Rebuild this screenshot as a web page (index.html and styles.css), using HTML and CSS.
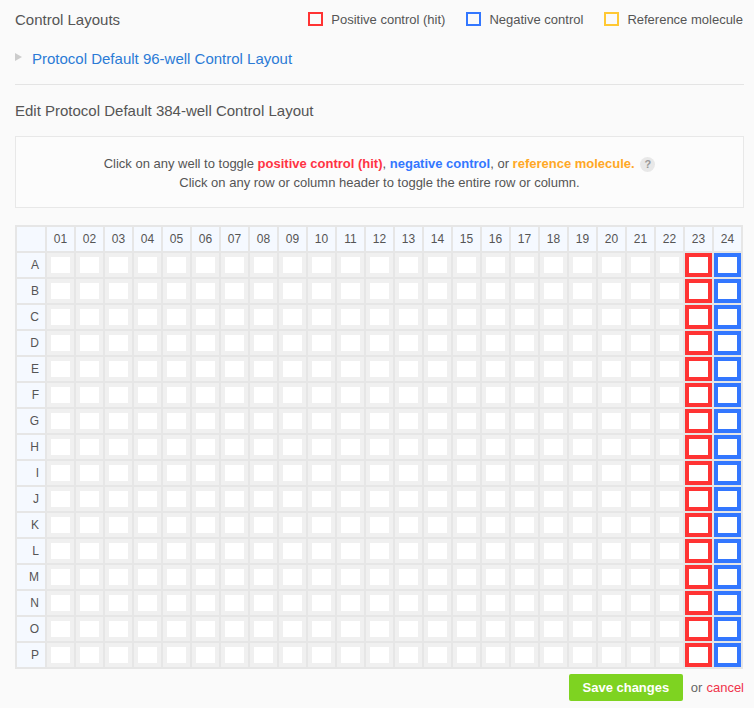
FILE: index.html
```html
<!DOCTYPE html>
<html>
<head>
<meta charset="utf-8">
<link rel="stylesheet" href="styles.css">
</head>
<body>
<div class="page">
  <div class="topbar">
    <h2 class="title">Control Layouts</h2>
    <ul class="legend">
      <li><span class="sq sq-pos"></span>Positive control (hit)</li>
      <li><span class="sq sq-neg"></span>Negative control</li>
      <li><span class="sq sq-ref"></span>Reference molecule</li>
    </ul>
  </div>
  <div class="collapsed"><span class="tri"></span><a class="link">Protocol Default 96-well Control Layout</a></div>
  <hr class="sep">
  <h3 class="edit-title">Edit Protocol Default 384-well Control Layout</h3>
  <div class="info">
    <p>Click on any well to toggle <b class="c-pos">positive control (hit)</b>, <b class="c-neg">negative control</b>, or <b class="c-ref">reference molecule.</b> <span class="help">?</span></p>
    <p>Click on any row or column header to toggle the entire row or column.</p>
  </div>
  <table class="plate">
    <tr><th class="corner"></th><th>01</th><th>02</th><th>03</th><th>04</th><th>05</th><th>06</th><th>07</th><th>08</th><th>09</th><th>10</th><th>11</th><th>12</th><th>13</th><th>14</th><th>15</th><th>16</th><th>17</th><th>18</th><th>19</th><th>20</th><th>21</th><th>22</th><th>23</th><th>24</th></tr>
    <tr><th class="rh">A</th><td><b></b></td><td><b></b></td><td><b></b></td><td><b></b></td><td><b></b></td><td><b></b></td><td><b></b></td><td><b></b></td><td><b></b></td><td><b></b></td><td><b></b></td><td><b></b></td><td><b></b></td><td><b></b></td><td><b></b></td><td><b></b></td><td><b></b></td><td><b></b></td><td><b></b></td><td><b></b></td><td><b></b></td><td><b></b></td><td class="pos"><b></b></td><td class="neg"><b></b></td></tr>
    <tr><th class="rh">B</th><td><b></b></td><td><b></b></td><td><b></b></td><td><b></b></td><td><b></b></td><td><b></b></td><td><b></b></td><td><b></b></td><td><b></b></td><td><b></b></td><td><b></b></td><td><b></b></td><td><b></b></td><td><b></b></td><td><b></b></td><td><b></b></td><td><b></b></td><td><b></b></td><td><b></b></td><td><b></b></td><td><b></b></td><td><b></b></td><td class="pos"><b></b></td><td class="neg"><b></b></td></tr>
    <tr><th class="rh">C</th><td><b></b></td><td><b></b></td><td><b></b></td><td><b></b></td><td><b></b></td><td><b></b></td><td><b></b></td><td><b></b></td><td><b></b></td><td><b></b></td><td><b></b></td><td><b></b></td><td><b></b></td><td><b></b></td><td><b></b></td><td><b></b></td><td><b></b></td><td><b></b></td><td><b></b></td><td><b></b></td><td><b></b></td><td><b></b></td><td class="pos"><b></b></td><td class="neg"><b></b></td></tr>
    <tr><th class="rh">D</th><td><b></b></td><td><b></b></td><td><b></b></td><td><b></b></td><td><b></b></td><td><b></b></td><td><b></b></td><td><b></b></td><td><b></b></td><td><b></b></td><td><b></b></td><td><b></b></td><td><b></b></td><td><b></b></td><td><b></b></td><td><b></b></td><td><b></b></td><td><b></b></td><td><b></b></td><td><b></b></td><td><b></b></td><td><b></b></td><td class="pos"><b></b></td><td class="neg"><b></b></td></tr>
    <tr><th class="rh">E</th><td><b></b></td><td><b></b></td><td><b></b></td><td><b></b></td><td><b></b></td><td><b></b></td><td><b></b></td><td><b></b></td><td><b></b></td><td><b></b></td><td><b></b></td><td><b></b></td><td><b></b></td><td><b></b></td><td><b></b></td><td><b></b></td><td><b></b></td><td><b></b></td><td><b></b></td><td><b></b></td><td><b></b></td><td><b></b></td><td class="pos"><b></b></td><td class="neg"><b></b></td></tr>
    <tr><th class="rh">F</th><td><b></b></td><td><b></b></td><td><b></b></td><td><b></b></td><td><b></b></td><td><b></b></td><td><b></b></td><td><b></b></td><td><b></b></td><td><b></b></td><td><b></b></td><td><b></b></td><td><b></b></td><td><b></b></td><td><b></b></td><td><b></b></td><td><b></b></td><td><b></b></td><td><b></b></td><td><b></b></td><td><b></b></td><td><b></b></td><td class="pos"><b></b></td><td class="neg"><b></b></td></tr>
    <tr><th class="rh">G</th><td><b></b></td><td><b></b></td><td><b></b></td><td><b></b></td><td><b></b></td><td><b></b></td><td><b></b></td><td><b></b></td><td><b></b></td><td><b></b></td><td><b></b></td><td><b></b></td><td><b></b></td><td><b></b></td><td><b></b></td><td><b></b></td><td><b></b></td><td><b></b></td><td><b></b></td><td><b></b></td><td><b></b></td><td><b></b></td><td class="pos"><b></b></td><td class="neg"><b></b></td></tr>
    <tr><th class="rh">H</th><td><b></b></td><td><b></b></td><td><b></b></td><td><b></b></td><td><b></b></td><td><b></b></td><td><b></b></td><td><b></b></td><td><b></b></td><td><b></b></td><td><b></b></td><td><b></b></td><td><b></b></td><td><b></b></td><td><b></b></td><td><b></b></td><td><b></b></td><td><b></b></td><td><b></b></td><td><b></b></td><td><b></b></td><td><b></b></td><td class="pos"><b></b></td><td class="neg"><b></b></td></tr>
    <tr><th class="rh">I</th><td><b></b></td><td><b></b></td><td><b></b></td><td><b></b></td><td><b></b></td><td><b></b></td><td><b></b></td><td><b></b></td><td><b></b></td><td><b></b></td><td><b></b></td><td><b></b></td><td><b></b></td><td><b></b></td><td><b></b></td><td><b></b></td><td><b></b></td><td><b></b></td><td><b></b></td><td><b></b></td><td><b></b></td><td><b></b></td><td class="pos"><b></b></td><td class="neg"><b></b></td></tr>
    <tr><th class="rh">J</th><td><b></b></td><td><b></b></td><td><b></b></td><td><b></b></td><td><b></b></td><td><b></b></td><td><b></b></td><td><b></b></td><td><b></b></td><td><b></b></td><td><b></b></td><td><b></b></td><td><b></b></td><td><b></b></td><td><b></b></td><td><b></b></td><td><b></b></td><td><b></b></td><td><b></b></td><td><b></b></td><td><b></b></td><td><b></b></td><td class="pos"><b></b></td><td class="neg"><b></b></td></tr>
    <tr><th class="rh">K</th><td><b></b></td><td><b></b></td><td><b></b></td><td><b></b></td><td><b></b></td><td><b></b></td><td><b></b></td><td><b></b></td><td><b></b></td><td><b></b></td><td><b></b></td><td><b></b></td><td><b></b></td><td><b></b></td><td><b></b></td><td><b></b></td><td><b></b></td><td><b></b></td><td><b></b></td><td><b></b></td><td><b></b></td><td><b></b></td><td class="pos"><b></b></td><td class="neg"><b></b></td></tr>
    <tr><th class="rh">L</th><td><b></b></td><td><b></b></td><td><b></b></td><td><b></b></td><td><b></b></td><td><b></b></td><td><b></b></td><td><b></b></td><td><b></b></td><td><b></b></td><td><b></b></td><td><b></b></td><td><b></b></td><td><b></b></td><td><b></b></td><td><b></b></td><td><b></b></td><td><b></b></td><td><b></b></td><td><b></b></td><td><b></b></td><td><b></b></td><td class="pos"><b></b></td><td class="neg"><b></b></td></tr>
    <tr><th class="rh">M</th><td><b></b></td><td><b></b></td><td><b></b></td><td><b></b></td><td><b></b></td><td><b></b></td><td><b></b></td><td><b></b></td><td><b></b></td><td><b></b></td><td><b></b></td><td><b></b></td><td><b></b></td><td><b></b></td><td><b></b></td><td><b></b></td><td><b></b></td><td><b></b></td><td><b></b></td><td><b></b></td><td><b></b></td><td><b></b></td><td class="pos"><b></b></td><td class="neg"><b></b></td></tr>
    <tr><th class="rh">N</th><td><b></b></td><td><b></b></td><td><b></b></td><td><b></b></td><td><b></b></td><td><b></b></td><td><b></b></td><td><b></b></td><td><b></b></td><td><b></b></td><td><b></b></td><td><b></b></td><td><b></b></td><td><b></b></td><td><b></b></td><td><b></b></td><td><b></b></td><td><b></b></td><td><b></b></td><td><b></b></td><td><b></b></td><td><b></b></td><td class="pos"><b></b></td><td class="neg"><b></b></td></tr>
    <tr><th class="rh">O</th><td><b></b></td><td><b></b></td><td><b></b></td><td><b></b></td><td><b></b></td><td><b></b></td><td><b></b></td><td><b></b></td><td><b></b></td><td><b></b></td><td><b></b></td><td><b></b></td><td><b></b></td><td><b></b></td><td><b></b></td><td><b></b></td><td><b></b></td><td><b></b></td><td><b></b></td><td><b></b></td><td><b></b></td><td><b></b></td><td class="pos"><b></b></td><td class="neg"><b></b></td></tr>
    <tr><th class="rh">P</th><td><b></b></td><td><b></b></td><td><b></b></td><td><b></b></td><td><b></b></td><td><b></b></td><td><b></b></td><td><b></b></td><td><b></b></td><td><b></b></td><td><b></b></td><td><b></b></td><td><b></b></td><td><b></b></td><td><b></b></td><td><b></b></td><td><b></b></td><td><b></b></td><td><b></b></td><td><b></b></td><td><b></b></td><td><b></b></td><td class="pos"><b></b></td><td class="neg"><b></b></td></tr>
  </table>
  <div class="actions">
    <button class="save">Save changes</button>
    <span class="or">or</span>
    <a class="cancel">cancel</a>
  </div>
</div>
</body>
</html>
```

FILE: styles.css
```css
html, body {
  margin: 0;
  padding: 0;
  background: #fafafa;
}
body {
  font-family: "Liberation Sans", Arial, sans-serif;
  color: #555;
}
.page {
  padding: 0 10px 0 15px;
}
.topbar {
  display: flex;
  align-items: center;
  justify-content: space-between;
  height: 38px;
  padding-right: 1px;
}
.title {
  margin: 0;
  font-size: 15px;
  font-weight: normal;
  color: #555;
}
.legend {
  display: flex;
  list-style: none;
  margin: 0;
  padding: 0;
  font-size: 13px;
  color: #555;
}
.legend li {
  display: flex;
  align-items: center;
  margin-left: 21px;
}
.sq {
  display: inline-block;
  width: 11px;
  height: 10px;
  border: 2px solid;
  margin-right: 8px;
}
.sq-pos { border-color: #ff3333; }
.sq-neg { border-color: #3377ff; }
.sq-ref { border-color: #ffc833; }
.collapsed {
  display: flex;
  align-items: center;
  height: 41px;
}
.tri {
  width: 0;
  height: 0;
  border-left: 7px solid #cccccc;
  border-top: 4px solid transparent;
  border-bottom: 4px solid transparent;
  margin-right: 10px;
  margin-top: -3px;
}
.link {
  font-size: 15px;
  color: #2b7bd6;
  cursor: pointer;
}
.sep {
  border: 0;
  border-top: 1px solid #e4e4e4;
  margin: 5px 0 0 0;
  height: 0;
}
.edit-title {
  margin: 0;
  height: 51px;
  line-height: 52px;
  font-size: 15px;
  font-weight: normal;
  color: #555;
}
.info {
  border: 1px solid #e8e8e8;
  background: #fcfcfc;
  height: 72px;
  box-sizing: border-box;
  padding-top: 17px;
  text-align: center;
  font-size: 13px;
  color: #555;
}
.info p {
  margin: 0;
  line-height: 19px;
}
.info b {
  font-weight: bold;
}
.c-pos { color: #ff3344; }
.c-neg { color: #3377ff; }
.c-ref { color: #ffa826; }
.help {
  display: inline-block;
  width: 15px;
  height: 15px;
  line-height: 15px;
  border-radius: 50%;
  background: #e8e8e8;
  color: #999;
  font-weight: bold;
  font-size: 11px;
  text-align: center;
  vertical-align: middle;
  margin-left: 2px;
}
.plate {
  margin-top: 17px;
  border-collapse: separate;
  border-spacing: 2px;
  background: #e6e6e6;
}
.plate th {
  background: #f5f9ff;
  font-weight: normal;
  font-size: 12px;
  color: #555;
  height: 24px;
  width: 27px;
  padding: 0;
  text-align: center;
}
.plate th.corner {
  width: 28px;
}
.plate th.rh {
  text-align: right;
  padding-right: 6px;
  width: 22px;
}
.plate td {
  background: #f0f0f0;
  padding: 0;
  width: 27px;
  height: 24px;
}
.plate td b {
  display: block;
  width: 19px;
  height: 16px;
  margin: 4px;
  background: #ffffff;
}
.plate td.pos { background: #ff3333; }
.plate td.neg { background: #3377ff; }
.actions {
  display: flex;
  justify-content: flex-end;
  align-items: center;
  margin-top: 5px;
  font-size: 13px;
}
.save {
  width: 114px;
  height: 27px;
  border: 0;
  border-radius: 2px;
  background: #7ed321;
  color: #fff;
  font-family: "Liberation Sans", Arial, sans-serif;
  font-weight: bold;
  font-size: 13px;
  padding: 0;
  margin-right: 8px;
}
.or {
  color: #666;
  margin-right: 4px;
}
.cancel {
  color: #f0344a;
  cursor: pointer;
}
```
